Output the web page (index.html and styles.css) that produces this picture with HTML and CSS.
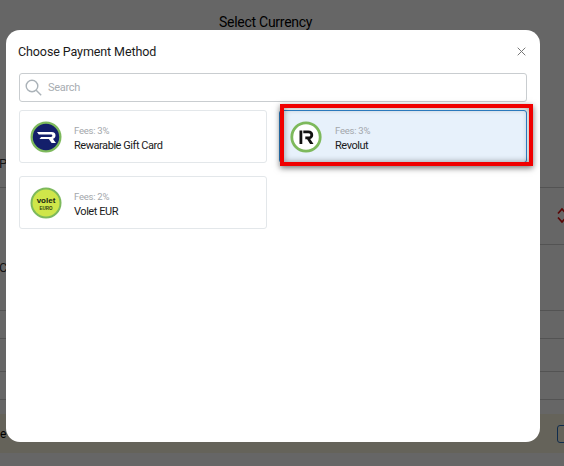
FILE: index.html
```html
<!DOCTYPE html>
<html lang="en">
<head>
<meta charset="utf-8">
<title>Choose Payment Method</title>
<link rel="stylesheet" href="styles.css">
</head>
<body>
<main class="page">
  <h1 class="page-title">Select Currency</h1>
  <div class="row row-pay"><span class="row-label">Pay</span></div>
  <div class="row row-swap">
    <svg class="swap" width="10" height="17" viewBox="0 0 10 17" fill="none" stroke="#e01010" stroke-width="1.700"><path d="M1 6.500l4-4.500 4 4.500M1 10.500l4 4.500 4-4.500"/></svg>
  </div>
  <div class="row row-crypto"><span class="row-label">Crypto</span></div>
  <div class="row row-a"></div>
  <div class="row row-b"></div>
  <div class="row row-c"></div>
  <div class="notice"><span class="notice-text">e</span><span class="notice-btn"></span></div>
</main>

<div class="backdrop"></div>

<section class="modal">
  <header class="modal-head">
    <h2 class="modal-title">Choose Payment Method</h2>
    <svg class="close" width="9" height="9" viewBox="0 0 9 9" stroke="#777" stroke-width="1" fill="none"><path d="M.7.7l7.600 7.600M8.300.7L.7 8.300"/></svg>
  </header>
  <div class="search">
    <svg class="search-icon" width="17" height="17" viewBox="0 0 17 17" fill="none" stroke="#aab2b8" stroke-width="1.400"><circle cx="7" cy="7" r="5.800"/><path d="M11.200 11.200l5 5"/></svg>
    <span class="search-text">Search</span>
  </div>
  <div class="methods">
    <div class="method">
      <svg class="logo" width="32" height="32" viewBox="0 0 32 32">
        <circle cx="16" cy="16" r="15.500" fill="#7db95c"/>
        <circle cx="16" cy="16" r="13.200" fill="#141f6b"/>
        <path d="M7 11h14.500c3 0 4 1.500 4 3.400 0 2-1.200 3-2.600 3.400l2.400 3.400.9.800h-4.600l-2.800-4H9.500l1.600-2h9.800c1 0 1.400-.5 1.400-1.200 0-.8-.5-1.300-1.500-1.300H8.800z" fill="#fff"/>
      </svg>
      <div class="method-text"><span class="fees">Fees: 3%</span><span class="name">Rewarable Gift Card</span></div>
    </div>
    <div class="method selected">
      <svg class="logo" width="32" height="32" viewBox="0 0 32 32">
        <circle cx="16" cy="16" r="14.200" fill="#fff" stroke="#7db95c" stroke-width="2.800"/>
        <path d="M9.500 9.500h2.800V23H9.500z" fill="#111"/>
        <path d="M13.300 9.500h5c3.100 0 4.900 1.800 4.900 4.400 0 2.100-1.200 3.500-3 4l3.300 5.100h-3.400l-3-4.700h-1.800v-2.700h3.200c1.200 0 1.800-.6 1.800-1.600s-.6-1.700-1.800-1.700h-5.200z" fill="#111"/>
      </svg>
      <div class="method-text"><span class="fees">Fees: 3%</span><span class="name">Revolut</span></div>
    </div>
    <div class="method">
      <svg class="logo" width="32" height="32" viewBox="0 0 32 32">
        <circle cx="16" cy="16" r="15.500" fill="#7db95c"/>
        <circle cx="16" cy="16" r="13.500" fill="#cfe64a"/>
        <text class="volet-word" x="16" y="15.500" text-anchor="middle">volet</text>
        <text class="volet-euro" x="16" y="22.500" text-anchor="middle">EURO</text>
      </svg>
      <div class="method-text"><span class="fees">Fees: 2%</span><span class="name">Volet EUR</span></div>
    </div>
  </div>
  <div class="highlight"></div>
</section>
</body>
</html>
```
FILE: styles.css
```css
* { box-sizing: border-box; }
html, body { margin: 0; height: 100%; overflow: hidden; }
body { background: #fff; font-family: "Roboto", "Liberation Sans", sans-serif; color: #111; }

.page { width: 564px; height: 466px; display: flex; flex-direction: column; overflow: hidden; background: #fff; }
.page-title { margin: 0; height: 46px; padding: 14px 0 0 219px; font-size: 14px; line-height: 17px; font-weight: 400; letter-spacing: -.27px; color: #000; }
.row { flex: none; border-bottom: 1px solid #d0d0d0; }
.row-pay { height: 142px; padding-top: 110px; }
.row-swap { height: 58px; border-bottom-color: transparent; display: flex; justify-content: flex-end; align-items: center; background: linear-gradient(#d0d0d0, #d0d0d0) right bottom / 30px 1px no-repeat; }
.swap { margin-right: -3px; margin-top: -2px; }
.row-crypto { height: 65px; padding-top: 14px; }
.row-a { height: 28px; }
.row-b { height: 33px; }
.row-c { height: 28px; }
.row-label { display: block; margin-left: -1px; font-size: 13px; color: #333; }
.notice { margin-top: 14px; height: 39px; background: #fdf8e0; display: flex; align-items: center; justify-content: space-between; }
.notice-text { font-size: 12px; color: #000; }
.notice-btn { width: 16px; height: 18px; margin-right: -9px; border: 1px solid #2a6fc0; border-radius: 3px; }

.backdrop { position: fixed; inset: 0; background: rgba(0, 0, 0, .6); }

.modal { position: fixed; left: 6px; top: 30px; width: 534px; height: 412px; padding: 0 13px; background: #fff; border-radius: 14px; }
.modal-head { display: flex; align-items: center; justify-content: space-between; height: 43px; padding-right: 1px; }
.modal-title { margin: 0 0 0 -1px; font-size: 12.500px; line-height: 16px; font-weight: 400; letter-spacing: -.1px; color: #1a1a1a; }
.search { display: flex; align-items: center; gap: 6px; height: 29px; padding-left: 5px; border: 1px solid #c9cdd0; border-radius: 3px; }
.search-text { font-size: 11px; letter-spacing: -.3px; color: #a8adb2; }
.methods { display: grid; grid-template-columns: 248px 248px; column-gap: 12px; row-gap: 13px; margin-top: 8px; }
.method { display: flex; align-items: center; height: 53px; padding-left: 10px; border: 1px solid #e3e7ea; border-radius: 3px; background: #fff; }
.method.selected { background: #e7f1fb; border-color: #2f86cf; }
.logo { flex: none; margin-right: 12px; }
.selected .logo { margin-right: 13px; }
.method-text { display: flex; flex-direction: column; padding-top: 3px; }
.fees { font-size: 9.500px; line-height: 14px; letter-spacing: -.25px; color: #a3a7ab; }
.name { font-size: 11px; line-height: 15px; letter-spacing: -.45px; color: #1a1a1a; }
.volet-word { font: 700 8px "Liberation Sans", sans-serif; fill: #1a1f10; }
.volet-euro { font: 700 4.500px "Liberation Sans", sans-serif; fill: #2e3a10; }

.highlight { position: absolute; left: 274px; top: 74px; width: 253px; height: 62px; border: 4px solid #f00000; box-shadow: 0 2px 6px rgba(0, 0, 0, .55), inset 0 0 6px rgba(0, 0, 0, .4); pointer-events: none; }
```
